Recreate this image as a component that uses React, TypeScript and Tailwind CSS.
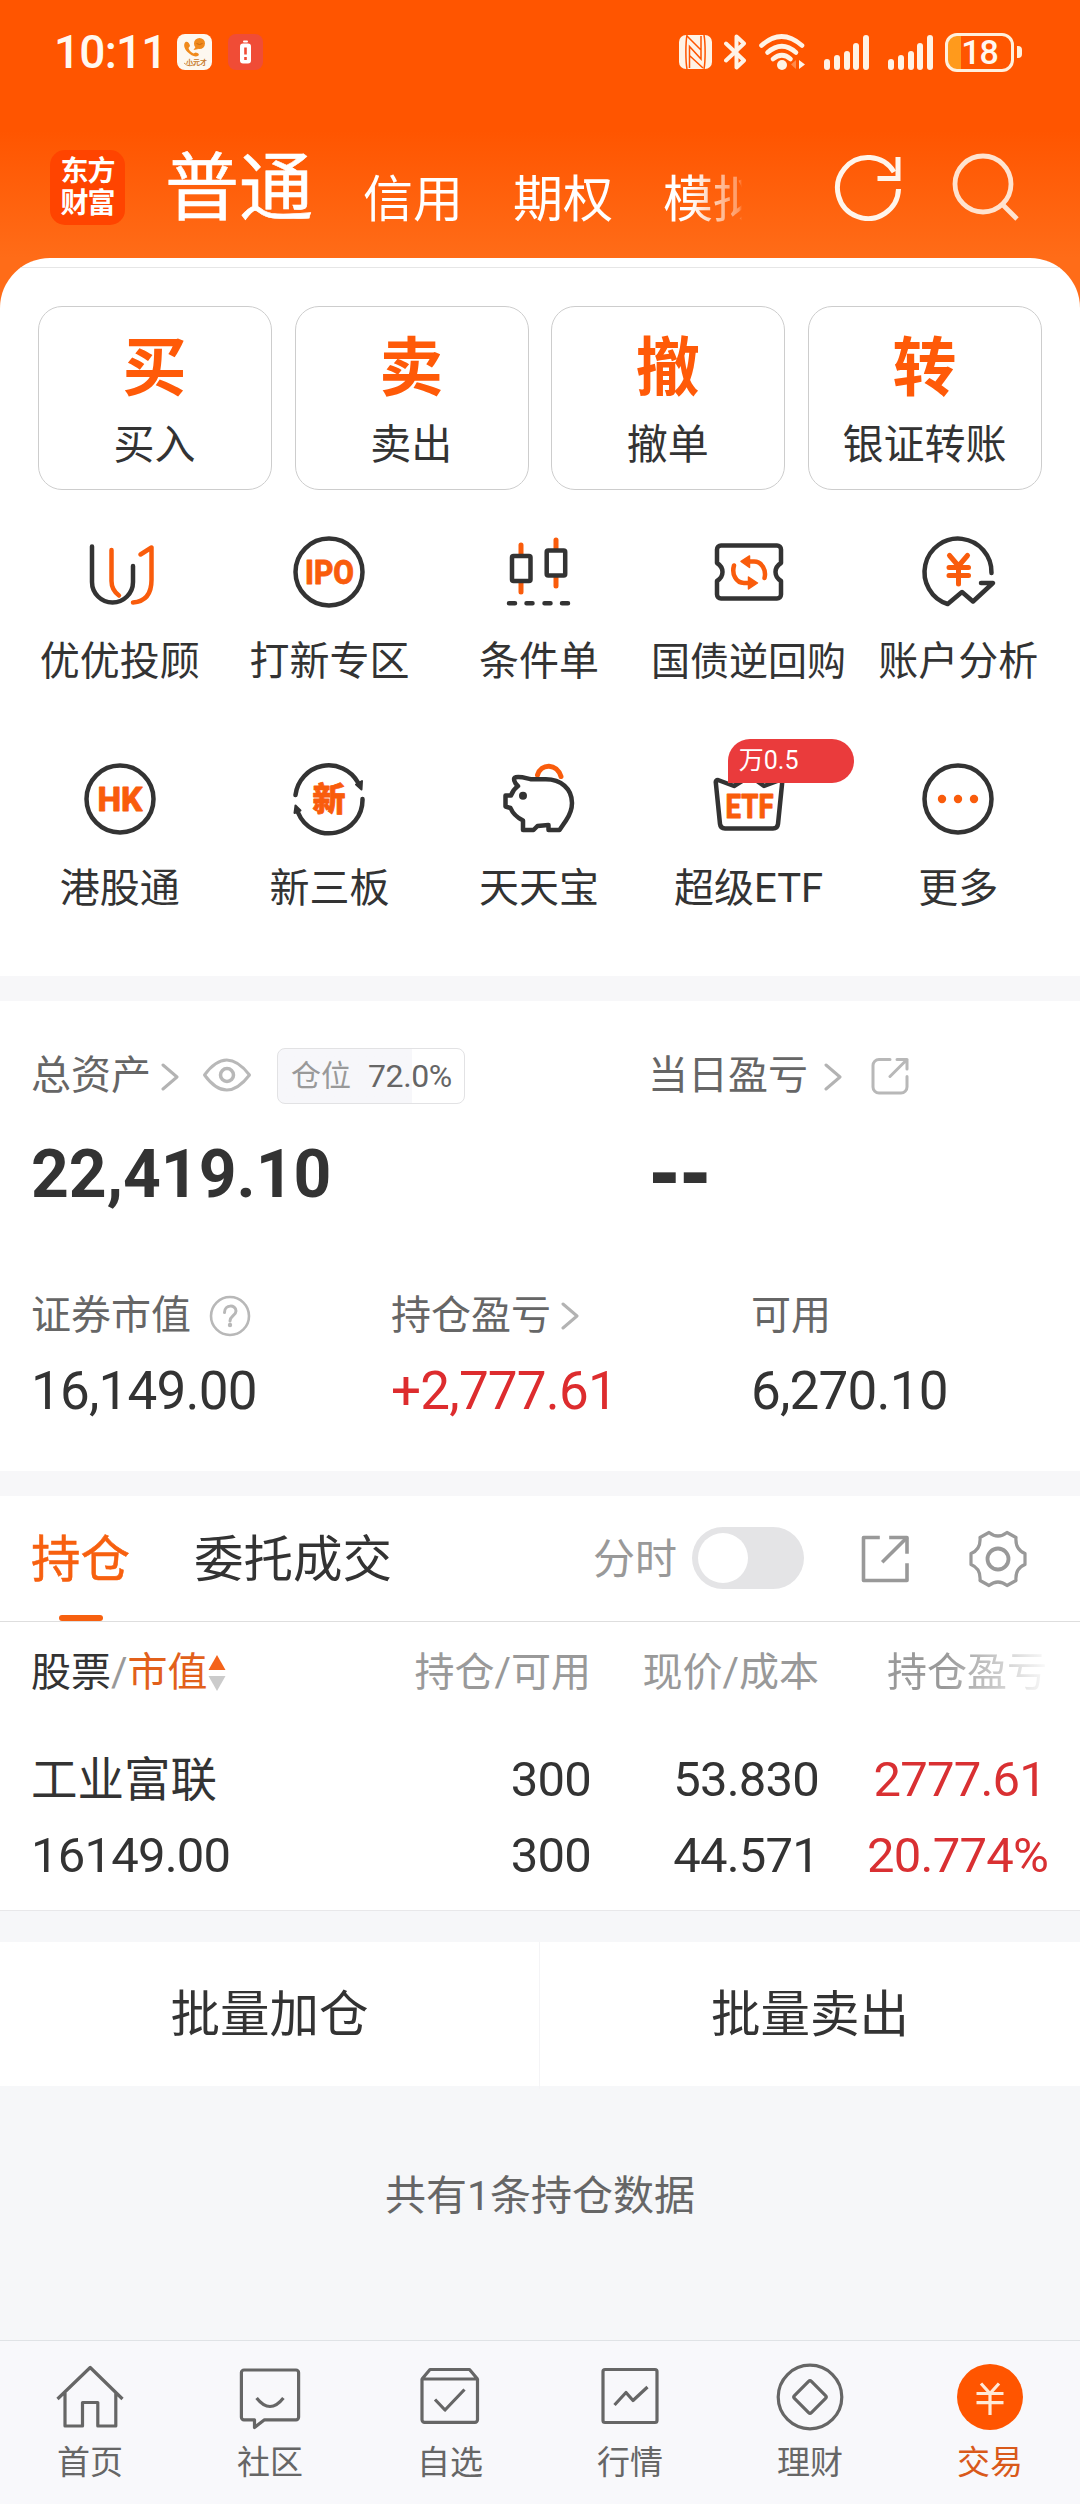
import React from "react";

const INK = "#333333";
const ORANGE = "#f95c0c";

function SignalBars() {
  return (
    <div className="flex h-[36px] w-[45px] items-end justify-between">
      <span className="h-[11px] w-[6px] rounded-full bg-[#fff3e6]" />
      <span className="h-[15px] w-[6px] rounded-full bg-[#fff3e6]" />
      <span className="h-[19px] w-[6px] rounded-full bg-[#fff3e6]" />
      <span className="h-[27px] w-[6px] rounded-full bg-[#fff3e6]" />
      <span className="h-[35px] w-[6px] rounded-full bg-[#fff3e6]" />
    </div>
  );
}

function StatusBar() {
  return (
    <div className="flex h-[104px] items-center pl-[54px] pr-[58px] text-[#fff8f0]">
      <span className="w-[123px] text-[46px] font-medium leading-[52px] tracking-[-0.8px]">10:11</span>
      <svg width="35" height="36" viewBox="0 0 35 36">
        <rect width="35" height="36" rx="8" fill="#fdf8f0" />
        <path d="M8.500 8c-2 2-2 6 2 10s8 5.500 11 3.500c1-1 0-2.500-3-3l-2 1c-3-1.500-4.500-3.500-5-5.500l1.500-2c-.5-3-2.500-5-4.500-4z" fill="#f08a1c" />
        <circle cx="22.500" cy="9.500" r="5.500" fill="#f08a1c" />
        <path d="M18.500 13l-2 3 5-1z" fill="#f08a1c" />
        <path d="M19.500 9.500q3 2 6 0" stroke="#c96a10" fill="none" />
        <text x="9" y="31" fontSize="7" fontWeight="700" fill="#c77a2a">小元才</text>
        <path d="M7 29q5 5 11 1" stroke="#c77a2a" strokeWidth="0.8" fill="none" />
      </svg>
      <svg className="ml-4" width="35" height="36" viewBox="0 0 35 36">
        <rect width="35" height="36" rx="8" fill="#f04c36" />
        <rect x="15" y="6.500" width="5" height="2" rx="1" fill="#fff" />
        <rect x="12" y="9.500" width="11" height="20" rx="3" fill="#fff" />
        <path d="M17.500 13.500v7M17.500 23v3" stroke="#f04c36" strokeWidth="2.600" />
      </svg>
      <div className="ml-auto flex items-center">
        <svg width="33" height="34" viewBox="0 0 33 34">
          <rect width="33" height="34" rx="7" fill="#fff3e6" />
          <path d="M8 0c-1.500 8-1.500 26 0 34M25 0c1.500 8 1.500 26 0 34" stroke="#ff5500" strokeWidth="1.500" fill="none" />
          <path d="M8 1L22 15v9L10.500 11.500v21.500M24 33L11 21M22 1v15" stroke="#ff5500" strokeWidth="1.500" fill="none" />
        </svg>
        <svg className="ml-[12px]" width="24" height="38" viewBox="0 0 24 38">
          <path d="M2 10.500l18 17-7.500 7V3.500l7.500 7-18 17" fill="none" stroke="#fff3e6" strokeWidth="4" strokeLinejoin="round" strokeLinecap="round" />
        </svg>
        <svg className="ml-[11px]" width="47" height="38" viewBox="0 0 47 38">
          <g fill="none" stroke="#fff3e6" strokeWidth="4.600" strokeLinecap="round">
            <path d="M2.500 12.500q20-18 40.500 0" />
            <path d="M8.500 19.500q14.500-12.500 28.500 0" />
            <path d="M14 26q9-7.500 17.500 0" />
          </g>
          <circle cx="23" cy="32" r="5" fill="#fff3e6" />
          <path d="M37 27v9l-5-4.500z" fill="#ff8a4a" />
          <path d="M40 27v9l6-4.500z" fill="#fff3e6" />
        </svg>
        <div className="ml-[18px]">
          <SignalBars />
        </div>
        <div className="ml-[19px]">
          <SignalBars />
        </div>
        <div className="ml-[12px] flex h-[39px] w-[69px] items-center justify-center overflow-hidden rounded-[12px] border-[3px] border-[#fff0dd] bg-linear-to-r from-[#ff9a1c] from-20% to-transparent to-20%">
          <span className="text-[34px] font-medium leading-[34px] tracking-[-1px]">18</span>
        </div>
        <span className="ml-[3px] h-[12px] w-[5px] rounded-r-[4px] bg-[#fff0dd]" />
      </div>
    </div>
  );
}

function TopNav() {
  return (
    <div className="flex h-[154px] items-center pl-[50px] pr-[60px] pt-[12px] text-white">
      <div className="flex size-[75px] flex-col items-center justify-center rounded-[15px] bg-[#ff4400] pt-[2px] text-[28px] font-bold leading-[32px] tracking-[-1px]">
        <span>东方</span>
        <span>财富</span>
      </div>
      <div className="ml-[40px] mt-[3px] text-[74px] leading-[80px] [-webkit-text-stroke:0.6px_white]">普通</div>
      <div className="mt-[25px] flex gap-[50px] pl-[50px] text-[50px] leading-[60px]">
        <span>信用</span>
        <span>期权</span>
        <span className="whitespace-nowrap [mask-image:linear-gradient(to_right,#000_27px,rgba(0,0,0,0.35)_76px,transparent_79px)]">模拟</span>
      </div>
      <svg className="ml-auto" width="68" height="68" viewBox="0 0 68 68" fill="none" stroke="#fff5eb" strokeWidth="5">
        <path d="M64.500 36A30.500 30.500 0 1 1 60 19" />
        <path d="M64 4v21.500H43.500" />
      </svg>
      <svg className="ml-[50px]" width="68" height="68" viewBox="0 0 68 68" fill="none" stroke="#ffe3cf" strokeWidth="4.800">
        <circle cx="31" cy="31" r="28" />
        <path d="M51 52l14 14" />
      </svg>
    </div>
  );
}

const actions = [
  { mark: "买", label: "买入" },
  { mark: "卖", label: "卖出" },
  { mark: "撤", label: "撤单" },
  { mark: "转", label: "银证转账" },
];

function Glyph({ children }: { children: React.ReactNode }) {
  return (
    <svg className="shrink-0" width="84" height="84" viewBox="0 0 84 84" fill="none" stroke={INK} strokeWidth="4.500" strokeLinecap="round" strokeLinejoin="round">
      {children}
    </svg>
  );
}

function GlyphText({ x, y = 54, width, children }: { x: number; y?: number; width: number; children: string }) {
  return (
    <text x={x} y={y} fontSize="33" fontWeight="800" textLength={width} lengthAdjust="spacingAndGlyphs" fill={ORANGE} stroke={ORANGE} strokeWidth="0.8">
      {children}
    </text>
  );
}

const shortcuts = [
  {
    label: "优优投顾",
    icon: (
      <Glyph>
        <path d="M14 16.500V52a20.500 20.500 0 0 0 41 0V36" />
        <path d="M33.500 20V51q0 9 7.500 14.500M62.500 24.500l11-7V50Q73.500 71 55 72.500" stroke={ORANGE} />
      </Glyph>
    ),
  },
  {
    label: "打新专区",
    icon: (
      <Glyph>
        <circle cx="42" cy="42" r="33.500" />
        <GlyphText x={18} width={49}>IPO</GlyphText>
      </Glyph>
    ),
  },
  {
    label: "条件单",
    icon: (
      <Glyph>
        <path d="M24 15v9M24 53v9M59 10v9M59 47v9" stroke={ORANGE} strokeWidth="5" />
        <rect x="15" y="26" width="18.500" height="25" rx="1.500" />
        <rect x="49.700" y="20.500" width="18.500" height="25" rx="1.500" />
        <path d="M12 73.300h6M29.500 73.300h6M47.500 73.300h6M65 73.300h6" />
      </Glyph>
    ),
  },
  {
    label: "国债逆回购",
    icon: (
      <Glyph>
        <path d="M14 15.500h56a4 4 0 0 1 4 4V33q-5.500 3.500-5.500 9t5.500 9v13.500a4 4 0 0 1-4 4H14a4 4 0 0 1-4-4V51q5.500-3.500 5.500-9T10 33V19.500a4 4 0 0 1 4-4z" />
        <path d="M41 31.500h6c8 0 12.500 9 10.500 16.500M43 53h-6c-8 0-12.500-9-10-17.500" stroke={ORANGE} />
        <path d="M42.500 26v11.500l-8.500-6zM41.500 47v12l9-6z" fill={ORANGE} stroke={ORANGE} strokeWidth="1.500" />
      </Glyph>
    ),
  },
  {
    label: "账户分析",
    icon: (
      <Glyph>
        <path d="M75.500 43A33.500 33.500 0 1 0 31.700 74L46 62l11 9.500L77 53H65" />
        <path d="M33.500 25.500l9 10.500 9-10.500M33 37.500h19.500M33 45.500h19.500M42.500 37v17" stroke={ORANGE} strokeWidth="5" />
      </Glyph>
    ),
  },
  {
    label: "港股通",
    icon: (
      <Glyph>
        <circle cx="42" cy="42" r="33.500" />
        <GlyphText x={19.5} width={45}>HK</GlyphText>
      </Glyph>
    ),
  },
  {
    label: "新三板",
    icon: (
      <Glyph>
        <path d="M8.500 38A33.500 33.500 0 0 1 71 25.500M75.500 42A33.500 33.500 0 0 1 11 55.500" />
        <path d="M69 27.500l6-3.500-.5 8.500zM8.500 48.500l-1 7.500 6-2.500z" fill={INK} strokeWidth="2" />
        <GlyphText x={25.5} width={33}>新</GlyphText>
      </Glyph>
    ),
  },
  {
    label: "天天宝",
    icon: (
      <Glyph>
        <path d="M40.500 18C44 6 60 6 64 19.500" stroke={ORANGE} strokeWidth="5" />
        <path d="M21 29c-4-3-5-8-2.500-8.700 6-1 11 1.200 15.500 2h14C64 22 75 32 75 46c0 8-3 13-6 17.500L62.500 73H51.500v-5l-11 1-4 4H26V63.500C19 60 16 57 13.500 51l-5-1.500v-11H14q2-6 7-9.500z" />
        <circle cx="26" cy="38.700" r="4" fill={INK} stroke="none" />
      </Glyph>
    ),
  },
  {
    label: "超级ETF",
    badge: "万0.5",
    icon: (
      <Glyph>
        <path d="M27 29l-16-6q-2.500 0-2.200 2.500L13 67q.5 4.500 5 4.500h48q4.500 0 5-4.500l4.200-41.500q.3-2.500-2.200-2.500l-16 6-14-10z" />
        <GlyphText x={18.5} y={60.5} width={48}>ETF</GlyphText>
      </Glyph>
    ),
  },
  {
    label: "更多",
    icon: (
      <Glyph>
        <circle cx="42" cy="42" r="33.500" />
        <g fill={ORANGE} stroke="none">
          <circle cx="26" cy="42" r="4.200" />
          <circle cx="42" cy="42" r="4.200" />
          <circle cx="58" cy="42" r="4.200" />
        </g>
      </Glyph>
    ),
  },
];

function Shortcuts() {
  return (
    <div className="mt-[40px] grid grid-cols-5 gap-y-[71px] pl-[15px] pr-[17px]">
      {shortcuts.map((item) => (
        <div key={item.label} className="relative flex h-[156px] flex-col items-center">
          {item.icon}
          {item.badge && (
            <span className="absolute left-[84px] top-[-18px] h-[44px] w-[126px] rounded-full rounded-bl-none bg-[#ea3b3c] pl-[11px] text-[25px] leading-[44px] text-white">
              {item.badge}
            </span>
          )}
          <span className={item.label.length === 5 && !item.badge ? "mt-[23px] whitespace-nowrap text-[39px] leading-[50px]" : "mt-[23px] whitespace-nowrap text-[40px] leading-[50px]"}>
            {item.label}
          </span>
        </div>
      ))}
    </div>
  );
}

function Chevron({ className }: { className: string }) {
  return (
    <svg className={className} width="18" height="28" viewBox="0 0 18 28" fill="none" stroke="#b3b3b3" strokeWidth="3" strokeLinecap="round" strokeLinejoin="round">
      <path d="M2 2l14 12L2 26" />
    </svg>
  );
}

function Assets() {
  return (
    <section className="h-[470px] bg-white pt-[47px]">
      <div className="flex h-[56px] items-center pl-[31px] text-[40px] leading-[56px] text-[#666]">
        <div className="flex w-[617px] items-center">
          <span>总资产</span>
          <Chevron className="ml-[10px] mt-[2px]" />
          <svg className="mb-[2px] ml-[23px]" width="50" height="36" viewBox="0 0 50 36" fill="none" stroke="#b8b8b8" strokeWidth="3" strokeLinejoin="round">
            <path d="M2.500 18Q24.500-12 47.500 18Q24.500 48 2.500 18z" />
            <circle cx="25" cy="18" r="6.500" strokeWidth="3.500" />
          </svg>
          <div className="ml-[25px] flex h-[56px] w-[188px] items-center rounded-[8px] border border-[#e2e2e4] bg-linear-to-r from-[#f7f7fa] from-72% to-white to-72% pl-[13px]">
            <span className="text-[30px] text-[#999]">仓位</span>
            <span className="ml-[17px] text-[32px] tracking-[-0.4px]">72.0%</span>
          </div>
        </div>
        <span>当日盈亏</span>
        <Chevron className="ml-[16px] mt-[2px]" />
        <svg className="ml-[29px]" width="38" height="38" viewBox="0 0 38 38" fill="none" stroke="#b8b8b8" strokeWidth="3" strokeLinecap="round" strokeLinejoin="round">
          <path d="M19 2.500H8a6 6 0 0 0-6 6V30a6 6 0 0 0 6 6h22a6 6 0 0 0 6-6V19.500" />
          <path d="M26 2.500h10V12M36 2.500L19 19.500" />
        </svg>
      </div>
      <div className="mt-[31px] flex h-[80px] items-center pl-[31px] font-bold">
        <span className="w-[618px] text-[66px] leading-[80px]">22,419.10</span>
        <span className="mb-[4px] font-['DejaVu_Sans'] text-[74px] leading-[80px]">--</span>
      </div>
      <div className="mt-[73px] grid grid-cols-3 text-[40px] leading-[56px] text-[#666]">
        <div className="flex items-center pl-[31px]">
          证券市值
          <svg className="ml-[18px]" width="42" height="42" viewBox="0 0 42 42" fill="none" stroke="#b8b8b8" strokeWidth="2.600">
            <circle cx="21" cy="21" r="19" />
            <path d="M15.500 17.500c0-8.500 11.500-8 11.500-1.500 0 4.500-6 5-6 10" strokeWidth="3" strokeLinecap="round" />
            <circle cx="21" cy="30" r="2.200" fill="#b8b8b8" stroke="none" />
          </svg>
        </div>
        <div className="flex items-center pl-[31px]">
          持仓盈亏
          <Chevron className="ml-[10px]" />
        </div>
        <div className="pl-[31px]">可用</div>
      </div>
      <div className="mt-[17px] grid grid-cols-3 text-[53px] leading-[60px] tracking-[-0.8px]">
        <span className="pl-[31px]">16,149.00</span>
        <span className="pl-[31px] text-[#dd2c2e]">+2,777.61</span>
        <span className="pl-[31px]">6,270.10</span>
      </div>
    </section>
  );
}

function HoldingTabs() {
  return (
    <div className="flex h-[126px] items-center border-b border-[#dedede] pl-[31px] text-[49.500px] leading-[60px]">
      <div className="relative flex h-full items-center pt-[3px] text-[#f7600f] [-webkit-text-stroke:0.5px_#f7600f]">
        持仓
        <span className="absolute bottom-0 left-[28px] h-[6px] w-[44px] rounded-full bg-[#f7600f]" />
      </div>
      <span className="ml-[64px] mt-[3px]">委托成交</span>
      <span className="ml-[201px] mt-[3px] text-[42px] text-[#999]">分时</span>
      <div className="mb-[2px] ml-[15px] flex h-[62px] w-[112px] items-center rounded-full bg-[#e4e4e6] pl-[6px]">
        <span className="size-[50px] rounded-full bg-white" />
      </div>
      <svg className="ml-[56px]" width="50" height="50" viewBox="0 0 50 50" fill="none" stroke="#999" strokeWidth="3.600" strokeLinecap="square" strokeLinejoin="round">
        <path d="M18 3.500H3.500v43H47V31M31 3.500h16V18" />
        <path d="M46 4.500L23.500 27" />
      </svg>
      <svg className="ml-[59px]" width="58" height="58" viewBox="0 0 58 58" fill="none" stroke="#999" strokeWidth="3.200" strokeLinejoin="round">
        <path d="M20 2.500q9 7 18 0l9 5q-1 12 9 16v11q-10 4-9 16l-9 5q-9-7-18 0l-9-5q1-12-9-16v-11q10-4 9-16z" />
        <circle cx="29" cy="29" r="10.500" strokeWidth="3.800" />
      </svg>
    </div>
  );
}

function HoldingTable() {
  return (
    <div className="h-[289px] border-b border-[#e8e8ea] pl-[31px] pt-[23px]">
      <div className="grid grid-cols-[300px_260px_228px_229px] text-right text-[40px] leading-[56px] text-[#999]">
        <div className="flex items-center">
          <span className="text-[#333]">股票</span>
          <span>/</span>
          <span className="text-[#e2601a]">市值</span>
          <svg width="18" height="38" viewBox="0 0 18 38">
            <path d="M9 1l8.500 15H.5z" fill="#f4631a" />
            <path d="M9 37l8.500-15H.5z" fill="#cbcbcb" />
          </svg>
        </div>
        <span>持仓/可用</span>
        <span>现价/成本</span>
        <span className="pr-[1px] [mask-image:linear-gradient(to_right,#000_55%,rgba(0,0,0,0.08)_98%)]">持仓盈亏</span>
      </div>
      <div className="mt-[51px] grid grid-cols-[300px_260px_228px_229px] text-right text-[49px] leading-[56px] tracking-[-0.8px]">
        <span className="text-left text-[46.500px] tracking-normal">工业富联</span>
        <span>300</span>
        <span>53.830</span>
        <span className="pr-[2px] text-[#d93032]">2777.61</span>
      </div>
      <div className="mt-5 grid grid-cols-[300px_260px_228px_229px] text-right text-[49px] leading-[56px] tracking-[-0.8px]">
        <span className="text-left">16149.00</span>
        <span>300</span>
        <span>44.571</span>
        <span className="text-[#d93032]">20.774%</span>
      </div>
    </div>
  );
}

const tabs = [
  {
    label: "首页",
    icon: <path d="M3.500 38L36.200 6.500 68.500 38M11 31.500V65h17.500V41.500h15.300V65h18V31.500" />,
  },
  {
    label: "社区",
    icon: (
      <>
        <path d="M10 9h52a2.600 2.600 0 0 1 2.600 2.600v44.600a2.600 2.600 0 0 1-2.600 2.600H30.500L20.500 66.500v-7.700H10a2.600 2.600 0 0 1-2.600-2.600V11.600A2.600 2.600 0 0 1 10 9z" />
        <path d="M22.600 37q13.400 17 26.800 0" />
      </>
    ),
  },
  {
    label: "自选",
    icon: (
      <>
        <path d="M8 18h55.500v40.800a2.600 2.600 0 0 1-2.600 2.600H10.600A2.600 2.600 0 0 1 8 58.800zM8 18l8-9.500h39.500l8 9.500" />
        <path d="M21 38.500L31 49l19.500-20.500" />
      </>
    ),
  },
  {
    label: "行情",
    icon: (
      <>
        <rect x="9" y="8.500" width="54" height="53" rx="2" />
        <path d="M20.500 44L32 31.500l7 8L53.500 26" />
      </>
    ),
  },
  {
    label: "理财",
    icon: (
      <>
        <circle cx="36" cy="36" r="31.800" />
        <rect x="24" y="24" width="24" height="24" rx="2" transform="rotate(45 36 36)" />
      </>
    ),
  },
  {
    label: "交易",
    active: true,
    icon: (
      <>
        <circle cx="36" cy="36" r="33" fill="#ff5500" stroke="none" />
        <path d="M27 22.500l9 10 9-10M22.500 32.500h27M22.500 41.700h27M36 32v22" stroke="#ffe9d6" />
      </>
    ),
  },
];

function TabBar() {
  return (
    <nav className="grid h-[164px] grid-cols-6 border-t border-[#e0e3e6] bg-[#f8f8fb] pt-5">
      {tabs.map((tab) => (
        <div key={tab.label} className="flex flex-col items-center">
          <svg width="72" height="72" viewBox="0 0 72 72" fill="none" stroke="#666" strokeWidth="3.200" strokeLinejoin="round">
            {tab.icon}
          </svg>
          <span className={tab.active ? "mt-2 text-[33px] leading-[44px] text-[#d9591a]" : "mt-2 text-[33px] leading-[44px] text-[#666]"}>
            {tab.label}
          </span>
        </div>
      ))}
    </nav>
  );
}

export default function App() {
  return (
    <div className="flex h-[2504px] w-[1080px] flex-col overflow-hidden bg-[#f6f7f9] font-['Roboto','Noto_Sans_CJK_SC',sans-serif] text-[#333]">
      <div className="bg-[linear-gradient(to_bottom,#ff5500_130px,#ff6c18_258px)]">
        <StatusBar />
        <TopNav />
        <div className="h-[718px] overflow-hidden rounded-t-[50px] bg-white pt-[9px]">
          <div className="h-px bg-[#e6e6e6]" />
          <div className="mt-[38px] grid grid-cols-4 gap-[22.600px] px-[38px]">
            {actions.map((a) => (
              <div key={a.label} className="flex h-[184px] flex-col items-center rounded-[24px] border border-[#cdcdcd] pr-[1px] pt-[22px]">
                <span className="text-[64px] font-bold leading-[80px] text-[#ff5a08]">{a.mark}</span>
                <span className="mt-[8px] text-[41px] leading-[56px]">{a.label}</span>
              </div>
            ))}
          </div>
          <Shortcuts />
        </div>
      </div>
      <div className="h-[25px] bg-[#f7f7f9]" />
      <Assets />
      <div className="h-[25px] bg-[#f7f7f9]" />
      <section className="bg-white">
        <HoldingTabs />
        <HoldingTable />
      </section>
      <div className="mt-[31px] grid h-[144px] grid-cols-2 bg-white text-center text-[49.500px] leading-[147px]">
        <span className="border-r border-[#f4f4f6]">批量加仓</span>
        <span>批量卖出</span>
      </div>
      <p className="mt-[82px] text-center text-[41px] leading-[56px] text-[#666]">共有1条持仓数据</p>
      <div className="mt-auto">
        <TabBar />
      </div>
    </div>
  );
}
